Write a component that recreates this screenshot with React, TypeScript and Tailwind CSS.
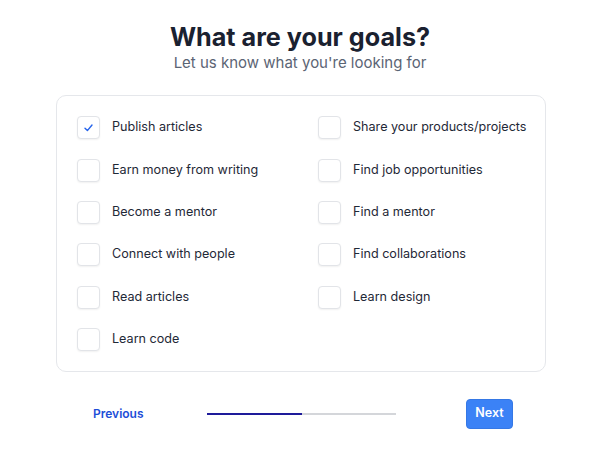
import { useState } from 'react';

const GOALS: [string, string | null][] = [
  ['Publish articles', 'Share your products/projects'],
  ['Earn money from writing', 'Find job opportunities'],
  ['Become a mentor', 'Find a mentor'],
  ['Connect with people', 'Find collaborations'],
  ['Read articles', 'Learn design'],
  ['Learn code', null],
];

const Checkbox = ({ checked, onClick }: { checked: boolean; onClick: () => void }) => (
  <button
    type="button"
    onClick={onClick}
    className="w-[23px] h-[23px] shrink-0 rounded-[4px] border border-[#e2e4e8] bg-white shadow-[0_1px_2px_rgba(0,0,0,0.06)] flex items-center justify-center"
  >
    {checked && (
      <svg width="9" height="8" viewBox="0 0 9 8" fill="none">
        <path d="M1 4.3 L3.4 6.6 L8 1" stroke="#2563eb" strokeWidth="1.4" strokeLinecap="round" strokeLinejoin="round" />
      </svg>
    )}
  </button>
);

const GoalItem = ({ label, checked, onToggle }: { label: string; checked: boolean; onToggle: () => void }) => (
  <div className="h-[42.4px] flex items-center">
    <Checkbox checked={checked} onClick={onToggle} />
    <span className="ml-[12px] text-[12.6px] text-[#1f2937]">{label}</span>
  </div>
);

const App = () => {
  const [selected, setSelected] = useState<string[]>(['Publish articles']);

  const toggle = (label: string) =>
    setSelected(s => (s.includes(label) ? s.filter(x => x !== label) : [...s, label]));

  return (
    <div className="w-[600px] h-[449px] bg-white font-['Inter','Noto_Sans',sans-serif] pt-[21px]">
      <h1 className="text-center text-[25.2px] leading-8 font-bold text-[#1a2130]">What are your goals?</h1>
      <p className="text-center text-[15px] leading-5 text-[#5b6474]">Let us know what you're looking for</p>

      <div className="ml-[56px] mt-[22px] w-[490px] rounded-[10px] border border-[#e5e7eb] pl-[20px] pt-[10.5px] pb-[10px] grid grid-cols-[241px_1fr]">
        {GOALS.map(([left, right]) => (
          <div key={left} className="contents">
            <GoalItem label={left} checked={selected.includes(left)} onToggle={() => toggle(left)} />
            {right ? (
              <GoalItem label={right} checked={selected.includes(right)} onToggle={() => toggle(right)} />
            ) : (
              <div />
            )}
          </div>
        ))}
      </div>

      <div className="ml-[56px] mt-[27px] w-[490px] flex items-center">
        <button type="button" className="ml-[37px] w-[49px] text-[12px] font-semibold text-[#1d4ed8] whitespace-nowrap">
          Previous
        </button>
        <div className="ml-[65px] w-[189px] h-[2px] flex bg-[#d4d6da]">
          <div className="w-1/2 h-full bg-[#1e1b9a]" />
        </div>
        <button
          type="button"
          className="ml-[70px] w-[47px] h-[30px] rounded-[4px] bg-[#3b82f6] border border-[#3578e5] text-white text-[12.5px] font-semibold"
        >
          Next
        </button>
      </div>
    </div>
  );
};

export default App;
